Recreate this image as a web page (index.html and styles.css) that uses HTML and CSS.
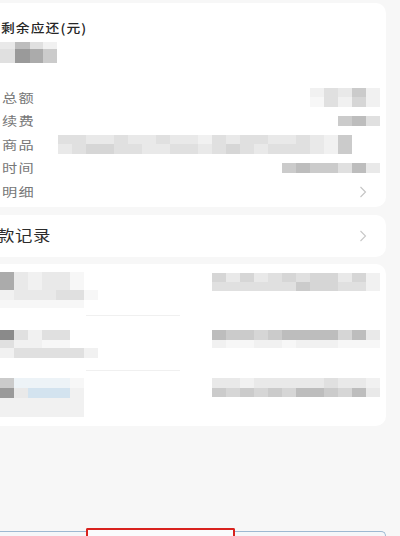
FILE: index.html
```html
<!DOCTYPE html>
<html lang="zh-CN">
<head>
<meta charset="utf-8">
<title>还款详情</title>
<link rel="stylesheet" href="styles.css">
</head>
<body>
<div class="page">
  <section class="card summary">
    <div class="title">剩余应还(元)</div>
    <div class="mz amount">
      <div class="mr h7"><i class="c2 w15"></i><i class="c6 w15"></i><i class="c3 w13"></i><i class="c1"></i></div>
      <div class="mr h14"><i class="c3 w15"></i><i class="c8 w15"></i><i class="c7 w13"></i><i class="c5"></i></div>
    </div>
    <div class="rows">
      <div class="row">
        <span class="label">总额</span>
        <div class="mz">
          <div class="mr h9"><i class="c1"></i><i class="c3"></i><i class="c2"></i><i class="c5"></i><i class="c1"></i></div>
          <div class="mr h10"><i class="c0"></i><i class="c3"></i><i class="c1"></i><i class="c4"></i><i class="c1"></i></div>
        </div>
      </div>
      <div class="row">
        <span class="label">续费</span>
        <div class="mz">
          <div class="mr h10"><i class="c5"></i><i class="c6"></i><i class="c3"></i></div>
        </div>
      </div>
      <div class="row">
        <span class="label">商品</span>
        <div class="mz goods">
          <div class="mr h9"><i class="c3"></i><i class="c3"></i><i class="c2"></i><i class="c2"></i><i class="c3"></i><i class="c2"></i><i class="c2"></i><i class="c3"></i><i class="c2"></i><i class="c2"></i><i class="c1"></i><i class="c3"></i><i class="c2"></i><i class="c3"></i><i class="c3"></i><i class="c2"></i><i class="c2"></i><i class="c3"></i><i class="c2"></i><i class="c1"></i><i class="c5"></i></div>
          <div class="mr h10"><i class="c2"></i><i class="c3"></i><i class="c4"></i><i class="c4"></i><i class="c3"></i><i class="c3"></i><i class="c2"></i><i class="c2"></i><i class="c3"></i><i class="c3"></i><i class="c2"></i><i class="c3"></i><i class="c4"></i><i class="c3"></i><i class="c2"></i><i class="c3"></i><i class="c3"></i><i class="c3"></i><i class="c2"></i><i class="c1"></i><i class="c5"></i></div>
        </div>
      </div>
      <div class="row">
        <span class="label">时间</span>
        <div class="mz">
          <div class="mr h10"><i class="c5"></i><i class="c6"></i><i class="c5"></i><i class="c5"></i><i class="c3"></i><i class="c6"></i><i class="c2"></i></div>
        </div>
      </div>
      <div class="row">
        <span class="label">明细</span>
        <svg class="chev" width="8" height="12" viewBox="0 0 8 12"><polyline points="1.5,1 6.5,6 1.5,11" fill="none" stroke="#c4c4c4" stroke-width="1.1"/></svg>
      </div>
    </div>
  </section>

  <section class="card link">
    <span class="link-text">款记录</span>
    <svg class="chev" width="8" height="12" viewBox="0 0 8 12"><polyline points="1.5,1 6.5,6 1.5,11" fill="none" stroke="#c8c8c8" stroke-width="1.1"/></svg>
  </section>

  <section class="card records">
    <div class="rec r1">
      <div class="mz left">
        <div class="mr h18"><i class="c7"></i><i class="c2"></i><i class="c1"></i><i class="c2"></i><i class="c2"></i><i class="c0"></i></div>
        <div class="mr h10"><i class="c1"></i><i class="c2"></i><i class="c2"></i><i class="c2"></i><i class="c3"></i><i class="c3"></i><i class="c0"></i></div>
        <div class="mr h8"><i class="c0"></i><i class="c0"></i><i class="c0"></i><i class="c0"></i><i class="c0"></i><i class="c0"></i></div>
      </div>
      <div class="mz right">
        <div class="mr h9"><i class="c4"></i><i class="c2"></i><i class="c4"></i><i class="c2"></i><i class="c3"></i><i class="c4"></i><i class="c3"></i><i class="c4"></i><i class="c4"></i><i class="c2"></i><i class="c4"></i><i class="c1"></i></div>
        <div class="mr h9"><i class="c3"></i><i class="c3"></i><i class="c3"></i><i class="c3"></i><i class="c3"></i><i class="c3"></i><i class="c5"></i><i class="c4"></i><i class="c4"></i><i class="c3"></i><i class="c3"></i><i class="c1"></i></div>
      </div>
    </div>
    <div class="divider"></div>
    <div class="rec r2">
      <div class="mz left">
        <div class="mr h10"><i class="c9"></i><i class="c3"></i><i class="c1"></i><i class="c3"></i><i class="c3"></i></div>
        <div class="mr h8"><i class="c3"></i><i class="c1"></i><i class="c1"></i><i class="c0"></i><i class="c0"></i></div>
        <div class="mr h10"><i class="c1"></i><i class="c3"></i><i class="c3"></i><i class="c3"></i><i class="c3"></i><i class="c3"></i><i class="c1"></i></div>
      </div>
      <div class="mz right">
        <div class="mr h10"><i class="c6"></i><i class="c5"></i><i class="c5"></i><i class="c4"></i><i class="c5"></i><i class="c6"></i><i class="c6"></i><i class="c6"></i><i class="c6"></i><i class="c4"></i><i class="c6"></i><i class="c2"></i></div>
        <div class="mr h8"><i class="c1"></i><i class="c0"></i><i class="c0"></i><i class="c1"></i><i class="c1"></i><i class="c0"></i><i class="c1"></i><i class="c1"></i><i class="c1"></i><i class="c0"></i><i class="c0"></i><i class="c0"></i></div>
      </div>
    </div>
    <div class="divider"></div>
    <div class="rec r3">
      <div class="mz left">
        <div class="mr h10"><i class="c5"></i><i class="b1"></i><i class="b1"></i><i class="b1"></i><i class="b1"></i><i class="c0"></i></div>
        <div class="mr h10"><i class="c8"></i><i class="c2"></i><i class="b2"></i><i class="b2"></i><i class="b2"></i><i class="c1"></i></div>
        <div class="mr h19"><i class="c1"></i><i class="c1"></i><i class="c1"></i><i class="c1"></i><i class="c1"></i><i class="c1"></i></div>
      </div>
      <div class="mz right">
        <div class="mr h10"><i class="c2"></i><i class="c2"></i><i class="c1"></i><i class="c2"></i><i class="c2"></i><i class="c2"></i><i class="c2"></i><i class="c2"></i><i class="c3"></i><i class="c2"></i><i class="c2"></i><i class="c1"></i></div>
        <div class="mr h9"><i class="c5"></i><i class="c4"></i><i class="c5"></i><i class="c4"></i><i class="c5"></i><i class="c4"></i><i class="c6"></i><i class="c6"></i><i class="c5"></i><i class="c4"></i><i class="c6"></i><i class="c2"></i></div>
      </div>
    </div>
  </section>

  <div class="bottom-bar">
    <div class="highlight"></div>
  </div>
</div>
</body>
</html>
```

FILE: styles.css
```css
html, body {
  margin: 0;
  padding: 0;
}
body {
  width: 400px;
  height: 536px;
  overflow: hidden;
  background: #f7f7f7;
  font-family: "Noto Sans CJK SC", "Noto Sans", sans-serif;
}
.page {
  display: flex;
  flex-direction: column;
  padding-top: 3px;
  height: 536px;
  box-sizing: border-box;
  overflow: hidden;
}
.card {
  background: #ffffff;
  border-radius: 10px;
  margin-left: -12px;
  margin-right: 14px;
  padding-left: 14px;
  padding-right: 6px;
  box-sizing: border-box;
  flex: none;
}
.summary {
  height: 204px;
  padding-top: 17px;
  display: flex;
  flex-direction: column;
}
.title {
  align-self: flex-start;
  margin-left: -1px;
  font-size: 12.5px;
  line-height: 16px;
  height: 16px;
  font-weight: 500;
  color: #262626;
  letter-spacing: 1px;
  transform: scaleX(1.1);
  transform-origin: left center;
  white-space: nowrap;
}
.mz {
  display: flex;
  flex-direction: column;
}
.mr {
  display: flex;
}
.mr i {
  display: block;
  width: 14px;
  flex: none;
}
.mr i.w15 { width: 15px; }
.mr i.w13 { width: 13px; }
.h7 { height: 7px; }
.h8 { height: 8px; }
.h9 { height: 9px; }
.h10 { height: 10px; }
.h14 { height: 14px; }
.h18 { height: 18px; }
.h19 { height: 19px; }
.c0 { background: #f7f7f7; }
.c1 { background: #f1f1f1; }
.c2 { background: #e9e9e9; }
.c3 { background: #e0e0e0; }
.c4 { background: #d6d6d6; }
.c5 { background: #cbcbcb; }
.c6 { background: #bdbdbd; }
.c7 { background: #ababab; }
.c8 { background: #9a9a9a; }
.c9 { background: #8a8a8a; }
.b1 { background: #edf3f7; }
.b2 { background: #d3e3ef; }
.amount {
  margin-top: 6px;
  margin-left: -2px;
}
.rows {
  margin-top: 23px;
  display: flex;
  flex-direction: column;
}
.row {
  height: 23.5px;
  display: flex;
  align-items: center;
  justify-content: space-between;
}
.label {
  display: inline-block;
  font-size: 12px;
  line-height: 16px;
  color: #777777;
  letter-spacing: 1px;
  transform: scaleX(1.27);
  transform-origin: left center;
  white-space: nowrap;
}
.goods {
  margin-right: 28px;
}
.chev {
  display: block;
  margin-right: 13px;
}
.link {
  margin-top: 8px;
  height: 42px;
  display: flex;
  align-items: center;
  justify-content: space-between;
}
.link-text {
  display: inline-block;
  margin-left: -5px;
  margin-bottom: 3px;
  font-size: 14.5px;
  line-height: 18px;
  color: #2c2c2c;
  letter-spacing: 0.5px;
  transform: scaleX(1.2);
  transform-origin: left center;
  white-space: nowrap;
}
.records {
  margin-top: 7px;
  height: 162px;
  display: flex;
  flex-direction: column;
}
.rec {
  display: flex;
  justify-content: space-between;
  align-items: flex-start;
  box-sizing: border-box;
}
.rec .left {
  margin-left: -2px;
}
.r1 {
  height: 51px;
  padding-top: 8px;
}
.r1 .right {
  margin-top: 1px;
}
.r2 {
  height: 54px;
  padding-top: 14px;
}
.r3 {
  height: 55px;
  padding-top: 7px;
}
.divider {
  height: 1px;
  margin-left: 84px;
  width: 94px;
  background: #f0f0f0;
}
.bottom-bar {
  position: relative;
  margin-top: 105px;
  margin-left: -12px;
  margin-right: 14px;
  height: 4px;
  flex: none;
  border: 1.5px solid #9db9d2;
  border-bottom: none;
  border-radius: 8px 8px 0 0;
  background: #f5f7f9;
}
.highlight {
  position: absolute;
  left: 97px;
  top: -4px;
  width: 149px;
  height: 8px;
  box-sizing: border-box;
  border: 2.5px solid #d8221e;
  border-bottom: none;
  border-radius: 2px 2px 0 0;
  background: #fafbfc;
}
```
